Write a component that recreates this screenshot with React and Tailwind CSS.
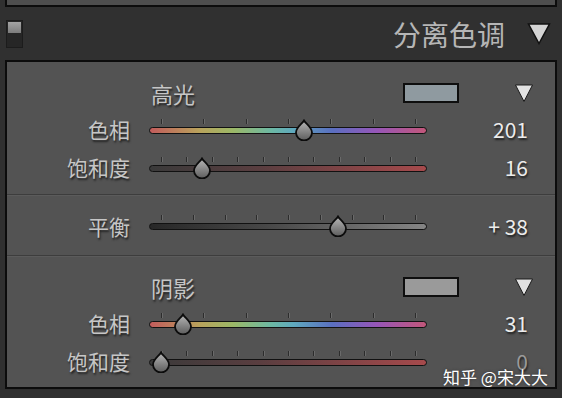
import React from 'react';

const FONT = { fontFamily: '"Noto Sans CJK SC", "Noto Sans", sans-serif' };

const HUE = 'linear-gradient(to right, #c25c5c 0%, #b9a35c 18%, #9cb867 30%, #6cb8a4 44%, #5fa9be 52%, #5a6fc0 66%, #9656b8 82%, #c2577a 100%)';
const SAT = 'linear-gradient(to right, #3a3a3a 0%, #5a3e40 40%, #a64a4c 100%)';
const BAL = 'linear-gradient(to right, #272727 0%, #4a4a4a 45%, #858585 100%)';

const Thumb = ({ left }) => (
    <svg
        className="absolute top-[-8px]"
        style={{ left: left - 11 }}
        width="22"
        height="22"
        viewBox="0 0 22 22"
    >
        <defs>
            <linearGradient id="tg" x1="0" y1="0" x2="0" y2="1">
                <stop offset="0" stopColor="#b8b8b8" />
                <stop offset="1" stopColor="#5c5c5c" />
            </linearGradient>
        </defs>
        <path
            d="M11 1.5 C13 5 19 8.5 19 13.5 A8 8 0 0 1 3 13.5 C3 8.5 9 5 11 1.5 Z"
            fill="url(#tg)"
            stroke="#0c0c0c"
            strokeWidth="1.8"
        />
    </svg>
);

const Slider = ({ label, value, frac, ticks, bg, valueClass = 'text-[#ececec]' }) => {
    const marks = Array.from({ length: ticks }, (_, i) => 12 + (254 * i) / (ticks - 1));
    return (
        <div className="flex items-center h-[38px]">
            <div className="w-[123px] text-right text-[21px] text-[#c6c6c6] [text-shadow:1px_2px_2px_#202020]">
                {label}
            </div>
            <div className="relative ml-[19px] w-[278px] h-[7px]">
                {marks.map((x) => (
                    <div
                        key={x}
                        className="absolute top-[-8px] w-px h-[5px] bg-[#2c2c2c] shadow-[1px_0_0_#6a6a6a]"
                        style={{ left: x }}
                    />
                ))}
                <div className="w-full h-full rounded-full border border-[#111]" style={{ background: bg }} />
                <Thumb left={12 + 256 * frac} />
            </div>
            <div className={`w-[101px] text-right text-[21px] [text-shadow:1px_2px_2px_#202020] ${valueClass}`}>
                {value}
            </div>
        </div>
    );
};

const Triangle = ({ className }) => (
    <svg className={className} width="20" height="20" viewBox="0 0 20 20">
        <path d="M1.5 2 L18.5 2 L10 18.5 Z" fill="#e2e2e2" stroke="#1a1a1a" strokeWidth="1" />
    </svg>
);

const GroupHeader = ({ title, swatch }) => (
    <div className="flex items-center h-[36px]">
        <div className="ml-[144px] text-[22px] text-[#c6c6c6] [text-shadow:1px_2px_2px_#202020]">{title}</div>
        <div className="flex-1" />
        <div className="w-[56px] h-[20px] border-2 border-[#0e0e0e]" style={{ background: swatch }} />
        <Triangle className="ml-[55px] mr-[21px]" />
    </div>
);

const Divider = () => <div className="h-[2px] border-t border-[#3d3d3d] border-b border-b-[#5b5b5b]" />;

export default function App() {
    return (
        <div className="w-[562px] h-[398px] bg-[#303030] overflow-hidden relative" style={FONT}>
            {/* top panel edge */}
            <div className="ml-[5px] w-[552px] h-[7px] bg-[#4e4e4e] border-x-2 border-b-2 border-[#0c0c0c]" />

            {/* section header */}
            <div className="flex items-center h-[53px] pl-[6px] pr-[11px]">
                <div className="w-[17px] h-[28px] bg-[#262626] border border-[#1c1c1c] p-[1px]">
                    <div className="h-[11px] bg-gradient-to-b from-[#a4a4a4] to-[#7c7c7c]" />
                </div>
                <div className="flex-1" />
                <div className="text-[28px] text-[#b6b6b6] mr-[22px] leading-none">分离色调</div>
                <svg width="24" height="23" viewBox="0 0 24 23">
                    <path d="M1.5 2 L22.5 2 L12 21.5 Z" fill="#d4d4d4" stroke="#111" strokeWidth="1.5" />
                </svg>
            </div>

            {/* main panel */}
            <div className="ml-[5px] w-[552px] bg-[#535353] border-2 border-[#0c0c0c]">
                <div className="pt-[13px] pb-[7px]">
                    <GroupHeader title="高光" swatch="#8f9aa0" />
                    <Slider label="色相" value="201" frac={201 / 360} ticks={7} bg={HUE} />
                    <Slider label="饱和度" value="16" frac={0.16} ticks={11} bg={SAT} />
                </div>
                <Divider />
                <div className="pt-[2px] h-[59px] flex flex-col justify-center">
                    <Slider label="平衡" value="+ 38" frac={0.69} ticks={9} bg={BAL} />
                </div>
                <Divider />
                <div className="pt-[12px] pb-[6px]">
                    <GroupHeader title="阴影" swatch="#9a9a9a" />
                    <Slider label="色相" value="31" frac={31 / 360} ticks={7} bg={HUE} />
                    <Slider label="饱和度" value="0" frac={0} ticks={11} bg={SAT} valueClass="text-[#9a9a9a]" />
                </div>
            </div>

            {/* watermark */}
            <div className="absolute left-[443px] top-[364px] text-[17px] text-white [text-shadow:0_0_3px_#333]">
                知乎 @宋大大
            </div>
        </div>
    );
}
